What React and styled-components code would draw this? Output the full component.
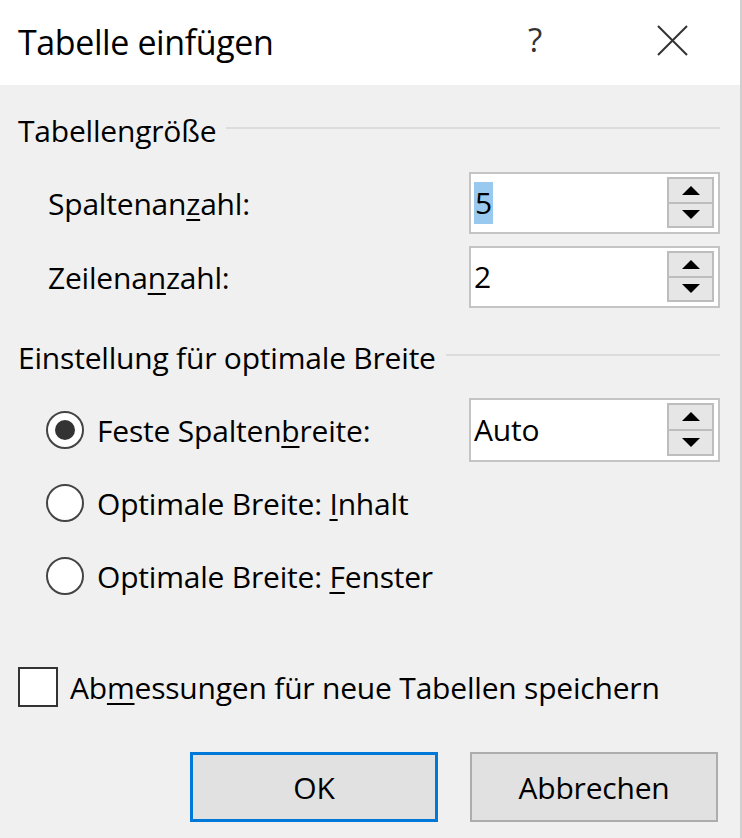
import React from 'react'
import styled, { createGlobalStyle } from 'styled-components'

const GlobalStyle = createGlobalStyle`
  html, body {
    margin: 0;
    padding: 0;
    background: #f0f0f0;
  }
  * { box-sizing: border-box; }
`

const Window = styled.div`
  width: 742px;
  height: 838px;
  background: #f0f0f0;
  border-right: 2px solid #cfcfcf;
  font-family: "Open Sans", "Noto Sans", sans-serif;
  color: #000;
  display: flex;
  flex-direction: column;
`

const TitleBar = styled.div`
  height: 85px;
  background: #fff;
  display: flex;
  align-items: center;
  padding-left: 18px;
`

const Title = styled.div`
  flex: 1;
  font-size: 34px;
  letter-spacing: -0.4px;
  margin-top: -2px;
`

const Help = styled.div`
  width: 40px;
  font-size: 33px;
  color: #333;
  text-align: center;
  margin-right: 102px;
  margin-top: -6px;
`

const Close = styled.div`
  width: 31px;
  height: 31px;
  margin-right: 52px;
  margin-top: -4px;
  display: flex;
`

const Body = styled.div`
  flex: 1;
  padding: 25px 20px 0 18px;
  display: flex;
  flex-direction: column;
  font-size: 30px;
  letter-spacing: -0.2px;
`

const GroupHeader = styled.div`
  height: 40px;
  display: flex;
  align-items: center;
  gap: 10px;
  margin-top: ${p => p.$top || 0}px;

  &::after {
    content: "";
    flex: 1;
    height: 2px;
    background: #dcdcdc;
    margin-top: -4px;
  }
`

const FieldRow = styled.div`
  display: flex;
  align-items: center;
  justify-content: space-between;
  padding-left: 30px;
  height: ${p => p.$h || 62}px;
  margin-top: ${p => p.$top || 0}px;
`

const Key = styled.span`
  text-decoration: underline;
  text-underline-offset: 4px;
  text-decoration-thickness: 2px;
`

const SpinBox = styled.div`
  width: 251px;
  height: 100%;
  background: #fff;
  border: 2px solid #c4c4c4;
  display: flex;
  align-items: center;
  padding: 3px 4px 4px 3px;
`

const SpinValue = styled.div`
  flex: 1;
  display: flex;
  align-items: center;
`

const Selected = styled.span`
  background: #99c9ef;
  padding: 0 1px;
  line-height: 42px;
`

const SpinButtons = styled.div`
  width: 47px;
  height: 100%;
  display: flex;
  flex-direction: column;
`

const SpinButton = styled.div`
  flex: 1;
  background: #e6e6e6;
  border: 2px solid #bdbdbd;
  display: flex;
  align-items: center;
  justify-content: center;

  & + & { border-top: none; }
`

const RadioLabel = styled.label`
  display: flex;
  align-items: center;
  gap: 13px;
  margin-left: -2px;
`

const RadioCircle = styled.span`
  width: 38px;
  height: 38px;
  border-radius: 50%;
  border: 2px solid #444;
  background: #fff;
  display: flex;
  align-items: center;
  justify-content: center;

  &::after {
    content: "";
    width: 20px;
    height: 20px;
    border-radius: 50%;
    background: ${p => (p.$checked ? '#333' : 'transparent')};
  }
`

const CheckRow = styled.div`
  display: flex;
  align-items: center;
  gap: 12px;
  height: 40px;
  margin-top: 59px;
`

const CheckBox = styled.span`
  width: 40px;
  height: 40px;
  border: 2px solid #333;
  background: #fff;
`

const ButtonRow = styled.div`
  display: flex;
  justify-content: flex-end;
  gap: 32px;
  margin-top: 45px;
  padding-right: 2px;
`

const Button = styled.button`
  width: 248px;
  height: 70px;
  background: #e1e1e1;
  border: ${p => (p.$default ? '3px solid #0078d7' : '2px solid #adadad')};
  font-family: "Open Sans", "Noto Sans", sans-serif;
  font-size: 30px;
  letter-spacing: -0.2px;
  color: #000;
  padding: 0;
`

function Arrow({ up }) {
  return (
    <svg width="18" height="9" viewBox="0 0 18 9">
      <polygon points={up ? '9,0 18,9 0,9' : '0,0 18,0 9,9'} fill="#000" />
    </svg>
  )
}

function Spinner({ children }) {
  return (
    <SpinBox>
      <SpinValue>{children}</SpinValue>
      <SpinButtons>
        <SpinButton><Arrow up /></SpinButton>
        <SpinButton><Arrow /></SpinButton>
      </SpinButtons>
    </SpinBox>
  )
}

function Radio({ checked, children }) {
  return (
    <RadioLabel>
      <RadioCircle $checked={checked} />
      <span>{children}</span>
    </RadioLabel>
  )
}

export default function App() {
  return (
    <>
      <GlobalStyle />
      <Window>
        <TitleBar>
          <Title>Tabelle einfügen</Title>
          <Help>?</Help>
          <Close>
            <svg width="31" height="31" viewBox="0 0 31 31">
              <path d="M1 1 L30 30 M30 1 L1 30" stroke="#333" strokeWidth="2" />
            </svg>
          </Close>
        </TitleBar>
        <Body>
          <GroupHeader>Tabellengröße</GroupHeader>
          <FieldRow $top={22}>
            <span>Spaltenan<Key>z</Key>ahl:</span>
            <Spinner><Selected>5</Selected></Spinner>
          </FieldRow>
          <FieldRow $top={12}>
            <span>Zeilena<Key>n</Key>zahl:</span>
            <Spinner>2</Spinner>
          </FieldRow>

          <GroupHeader $top={29}>Einstellung für optimale Breite</GroupHeader>
          <FieldRow $top={21} $h={64}>
            <Radio checked>Feste Spalten<Key>b</Key>reite:</Radio>
            <Spinner>Auto</Spinner>
          </FieldRow>
          <FieldRow $top={9} $h={64}>
            <Radio>Optimale Breite: <Key>I</Key>nhalt</Radio>
          </FieldRow>
          <FieldRow $top={9} $h={64}>
            <Radio>Optimale Breite: <Key>F</Key>enster</Radio>
          </FieldRow>

          <CheckRow>
            <CheckBox />
            <span>Ab<Key>m</Key>essungen für neue Tabellen speichern</span>
          </CheckRow>

          <ButtonRow>
            <Button $default>OK</Button>
            <Button>Abbrechen</Button>
          </ButtonRow>
        </Body>
      </Window>
    </>
  )
}
